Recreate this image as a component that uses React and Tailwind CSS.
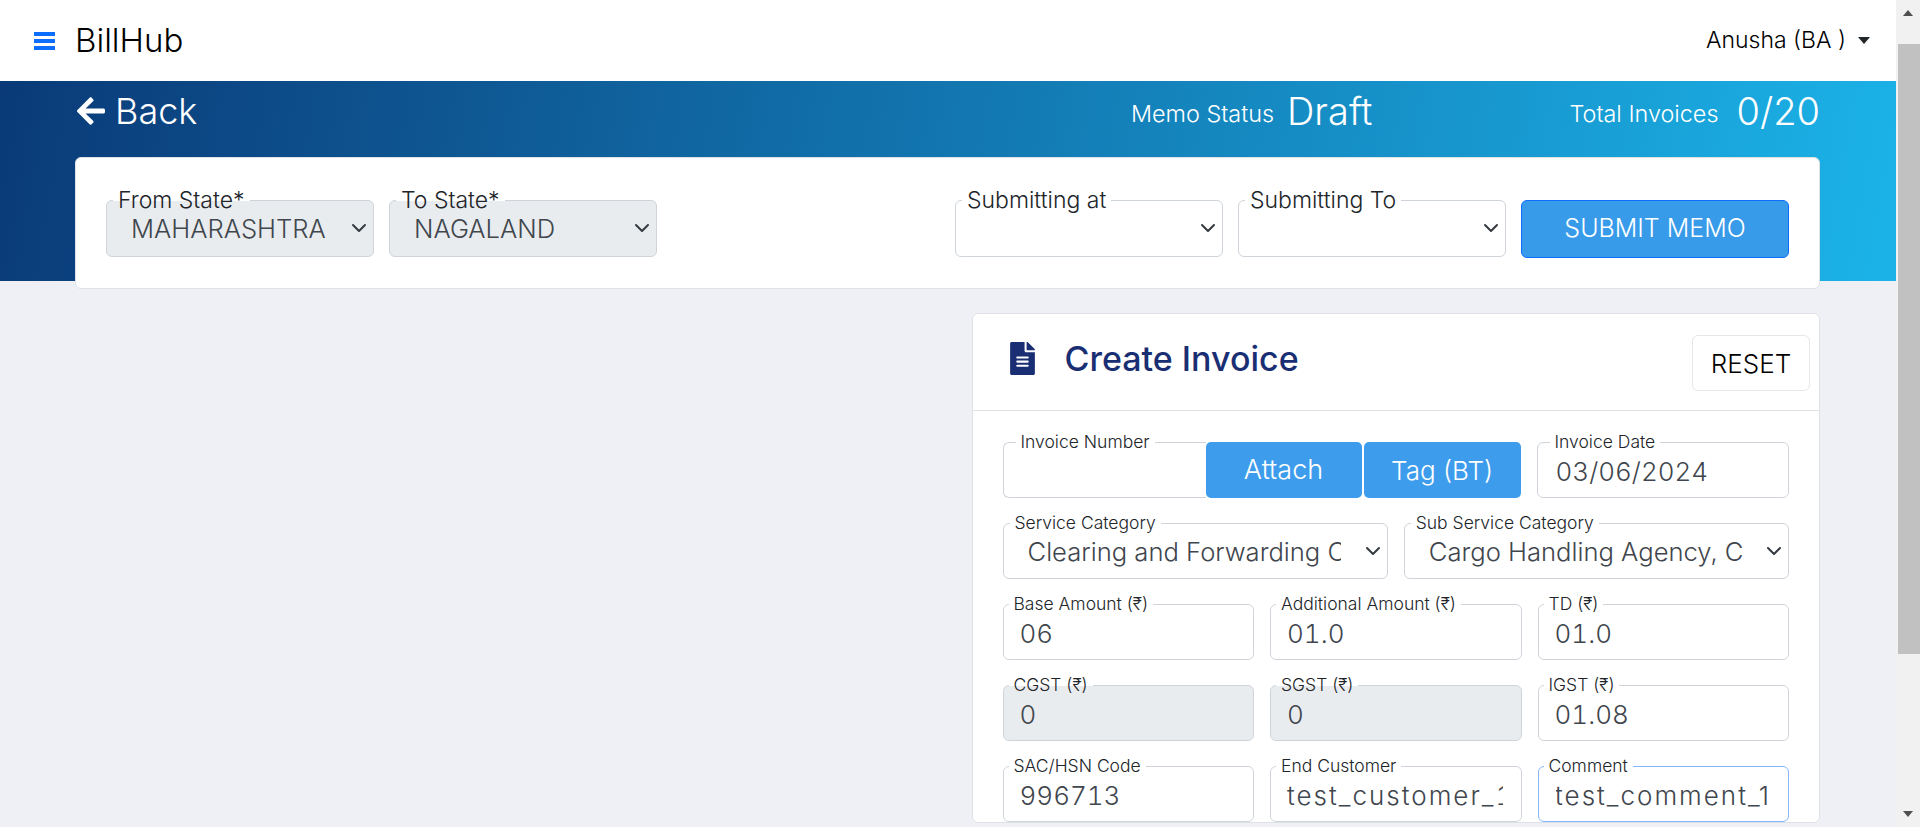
import { FaArrowLeft, FaFileAlt } from 'react-icons/fa'
import { ChevronDown } from 'lucide-react'

const font = "font-['Inter',sans-serif]"

function Field({ label, width, grey, focus, wideLabel, children }) {
  return (
    <div className={`relative h-[56px] ${width} rounded-[6px] border ${focus ? 'border-[#86b7fe]' : 'border-[#ced4da]'} ${grey ? 'bg-[#e9ecef]' : 'bg-white'}`}>
      <span className={`absolute ${wideLabel ? 'left-[12px]' : 'left-[5px]'} top-[-12px] bg-[linear-gradient(#fff_55%,transparent_55%)] px-[5px] text-[17.5px] font-light leading-[22px] text-[#212529] whitespace-nowrap`}>
        {label}
      </span>
      {children}
    </div>
  )
}

function Value({ children, grey, wide }) {
  return (
    <input
      readOnly
      value={children}
      className={`h-full w-full rounded-[6px] pl-[16px] pr-[18px] pt-[3px] text-[26px] font-light tabular-nums text-[#3f464d] outline-none ${wide ? 'tracking-[2px]' : ''} ${grey ? 'bg-[#e9ecef]' : 'bg-white'}`}
    />
  )
}

function Select({ label, value, width, grey, legend = 'text-[23px]' }) {
  return (
    <div className={`relative ${width} rounded-[6px] border border-[#ced4da] ${grey ? 'bg-[#e9ecef]' : 'bg-white'}`}>
      <span className={`absolute left-[6px] top-[-13px] bg-[linear-gradient(#fff_55%,transparent_55%)] px-[5px] ${legend} font-light leading-[24px] text-[#212529] whitespace-nowrap`}>
        {label}
      </span>
      <div className="flex h-full items-center pl-[24px] pr-[46px] pt-[2px]">
        <span className="block overflow-hidden whitespace-nowrap text-[25.6px] font-light text-[#3f464d]">{value}</span>
      </div>
      <ChevronDown size={24} strokeWidth={2} className="absolute right-[2px] top-[15px] text-[#343a40]" />
    </div>
  )
}

export default function App() {
  return (
    <div className={`flex h-[827px] overflow-hidden bg-[#eff0f5] ${font}`}>
      <div className="min-w-0 flex-1">
        {/* Navbar */}
        <header className="flex h-[81px] items-center justify-between bg-white pl-[34px] pr-[26px]">
          <div className="flex items-center gap-[20px]">
            <svg width="21" height="18" viewBox="0 0 21 18" className="text-[#0d6efd]">
              <rect width="21" height="4" fill="currentColor" />
              <rect y="7" width="21" height="4" fill="currentColor" />
              <rect y="14" width="21" height="4" fill="currentColor" />
            </svg>
            <span className="text-[33px] font-light text-black">BillHub</span>
          </div>
          <div className="flex items-center gap-[12px]">
            <span className="text-[23px] font-light text-black">Anusha (BA )</span>
            <span className="h-0 w-0 border-x-[6px] border-t-[7px] border-x-transparent border-t-[#212529]"></span>
          </div>
        </header>

        {/* Memo banner */}
        <section className="h-[200px] bg-[linear-gradient(100deg,#0a3a78,#1bb3e8)] pl-[75px] pr-[76px]">
          <div className="flex h-[76px] items-start justify-between pt-[8px] text-white">
            <div className="flex items-center gap-[8px]">
              <FaArrowLeft size={32} />
              <span className="text-[36px] font-light leading-[44px]">Back</span>
            </div>
            <div className="flex items-center">
              <div className="mr-[197px] flex items-center gap-[13px]">
                <span className="mt-[5px] text-[23.4px] font-light">Memo Status</span>
                <span className="text-[38px] font-light leading-[44px]">Draft</span>
              </div>
              <div className="flex items-center gap-[18px]">
                <span className="mt-[5px] text-[23.4px] font-light">Total Invoices</span>
                <span className="text-[38px] font-light leading-[44px]">0/20</span>
              </div>
            </div>
          </div>
          <div className="flex h-[132px] items-center justify-between rounded-[6px] border border-[#dee2e6] bg-white pl-[30px] pr-[30px] pt-[11px]">
            <div className="flex h-[57px] gap-[15px]">
              <Select label="From State*" value="MAHARASHTRA" width="w-[268px]" grey />
              <Select label="To State*" value="NAGALAND" width="w-[268px]" grey />
            </div>
            <div className="flex h-[57px] gap-[15px]">
              <Select label="Submitting at" value="" width="w-[268px]" />
              <Select label="Submitting To" value="" width="w-[268px]" />
              <button className="h-[58px] w-[268px] rounded-[6px] border border-[#0d6efd] bg-[#379bea] text-[25px] font-light text-white">
                SUBMIT MEMO
              </button>
            </div>
          </div>
        </section>

        {/* Create invoice */}
        <div className="mt-[32px] grid grid-cols-2 gap-12 pl-[75px] pr-[76px]">
          <div></div>
          <div className="rounded-[6px] border border-[#dee2e6] bg-white">
            <div className="flex h-[97px] items-start justify-between border-b border-[#dee2e6] pl-[33px] pr-[9px]">
              <div className="flex items-center gap-[26px] pt-[19px]">
                <FaFileAlt size={33} className="text-[#1a2f73]" />
                <h2 className="text-[34px] font-medium text-[#1a2f73]">Create Invoice</h2>
              </div>
              <button className="mt-[21px] h-[56px] w-[118px] rounded-[6px] border border-[#e5e7eb] bg-white text-[26px] font-light text-black">
                RESET
              </button>
            </div>
            <div className="flex flex-col gap-[25px] pl-[30px] pr-[30px] pt-[31px]">
              <div className="flex h-[56px]">
                <Field label="Invoice Number" wideLabel width="w-[203px] rounded-r-none border-r-0" />
                <button className="w-[156px] rounded-[5px] bg-[#3d9cec] text-[27px] font-light text-white">Attach</button>
                <button className="ml-[2px] w-[157px] rounded-[5px] bg-[#3d9cec] text-[26px] font-light text-white">Tag (BT)</button>
                <div className="ml-[16px] flex-1">
                  <Field label="Invoice Date" wideLabel width="w-full">
                    <div className="h-full pl-[2px]"><Value>03/06/2024</Value></div>
                  </Field>
                </div>
              </div>
              <div className="grid h-[56px] grid-cols-2 gap-[16px]">
                <Select label="Service Category" value="Clearing and Forwarding C" width="w-full" legend="text-[17.5px]" />
                <Select label="Sub Service Category" value="Cargo Handling Agency, Cle" width="w-full" legend="text-[17.5px]" />
              </div>
              <div className="grid grid-cols-3 gap-[16px]">
                <Field label="Base Amount (₹)"><Value>06</Value></Field>
                <Field label="Additional Amount (₹)"><Value>01.0</Value></Field>
                <Field label="TD (₹)"><Value>01.0</Value></Field>
              </div>
              <div className="grid grid-cols-3 gap-[16px]">
                <Field label="CGST (₹)" grey><Value grey>0</Value></Field>
                <Field label="SGST (₹)" grey><Value grey>0</Value></Field>
                <Field label="IGST (₹)"><Value>01.08</Value></Field>
              </div>
              <div className="grid grid-cols-3 gap-[16px]">
                <Field label="SAC/HSN Code"><Value>996713</Value></Field>
                <Field label="End Customer"><Value wide>test_customer_1</Value></Field>
                <Field label="Comment" focus>
                  <div className="ml-[17px] mr-[17px] flex h-full items-center justify-end overflow-hidden pt-[3px] text-[26px] font-light tracking-[2px] text-[#3f464d]">
                    <span className="whitespace-nowrap">test_comment_1</span>
                  </div>
                </Field>
              </div>
            </div>
          </div>
        </div>
      </div>

      {/* Page scrollbar */}
      <div className="relative flex w-[24px] shrink-0 flex-col bg-[#f1f1f1]">
        <div className="flex h-[26px] items-center justify-center">
          <span className="h-0 w-0 border-x-[5px] border-b-[6px] border-x-transparent border-b-[#505050]"></span>
        </div>
        <div className="ml-[2px] mt-[18px] h-[610px] bg-[#c1c1c1]"></div>
        <div className="mt-auto flex h-[26px] items-center justify-center">
          <span className="h-0 w-0 border-x-[5px] border-t-[6px] border-x-transparent border-t-[#505050]"></span>
        </div>
      </div>
    </div>
  )
}
